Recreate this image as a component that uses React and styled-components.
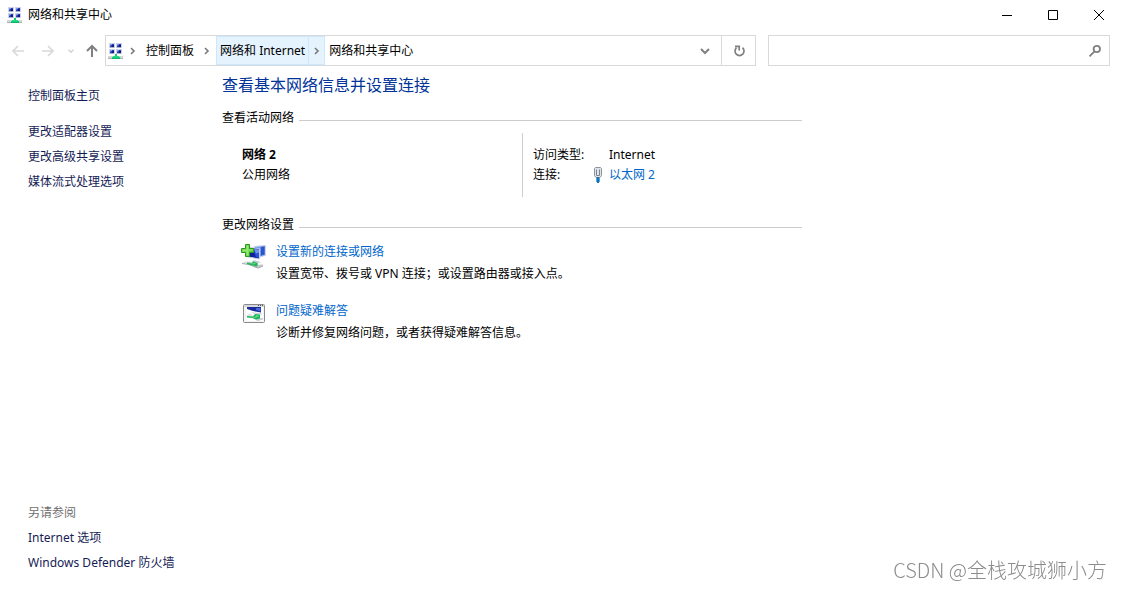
import React from 'react';
import styled, { createGlobalStyle } from 'styled-components';

const sideLinks = ['更改适配器设置', '更改高级共享设置', '媒体流式处理选项'];
const seeAlsoLinks = ['Internet 选项', 'Windows Defender 防火墙'];

const Monitor = ({ x, y }) => (
  <g transform={`translate(${x} ${y})`}>
    <rect width="6" height="5" fill="#cdd3e4" />
    <rect x="1" y="1" width="4" height="3" fill="#2a3fb8" />
    <rect x="1" y="1" width="2" height="1" fill="#7d9be6" />
    <rect x="1" y="2" width="1" height="1" fill="#5f7fdc" />
    <rect x="3" y="2" width="2" height="2" fill="#101a86" />
    <rect x="1" y="4" width="4" height="1" fill="#a9b1c8" />
  </g>
);

const NetworkIcon = () => (
  <svg width="16" height="16" viewBox="0 0 16 16" aria-hidden="true" shapeRendering="crispEdges">
    <Monitor x={1} y={0} />
    <Monitor x={8} y={0} />
    <Monitor x={1} y={6} />
    <Monitor x={8} y={6} />
    <rect x="0" y="13" width="15" height="2" fill="#d3d6d9" />
    <rect x="0" y="15" width="15" height="1" fill="#adb1b5" />
    <rect x="7" y="11" width="2" height="2" fill="#12c872" />
    <rect x="5" y="13" width="6" height="1" fill="#1bdc82" />
    <rect x="4" y="14" width="8" height="1" fill="#12d478" />
    <rect x="4" y="15" width="8" height="1" fill="#0eb566" />
  </svg>
);

const NewConnectionIcon = () => (
  <svg width="26" height="26" viewBox="0 0 26 26" aria-hidden="true">
    <path d="M13 3.500l11.500-1v10l-6 1.500z" fill="#6f9bea" stroke="#cdd5e6" />
    <path d="M20 4l3.500-.5v8l-3.500 1z" fill="#2e55c8" />
    <path d="M6.500 4.500l12 1v10.500l-11-2z" fill="#0f229c" stroke="#c3cde4" />
    <path d="M12 6l6 .5v8.500l-3-1z" fill="#2c50d6" />
    <path d="M13 6l5 .5v3l-3 1z" fill="#6f93ee" />
    <path d="M12 17l5 1 3 1.500-5 .5z" fill="#c5c9d0" />
    <path d="M1 19.500l6-1.500 4 1v2l-5 .5z" fill="#e0e2e6" />
    <path d="M14 22l8-.5v1.500l-5 2-4-1z" fill="#c3c6cc" />
    <path d="M1 20.500l7 1 6 2.500 3 1 5-2" fill="none" stroke="#a4a8b0" />
    <path d="M6 19.500l5 .5 1-2 5 2.500-1 3-5-1-5-1.500z" fill="#1fb257" />
    <path d="M7 20l5 .5 1-1 2 1.500-3 .5z" fill="#6cd88e" />
    <path d="M4.500 1.500h4v4h4v4h-4v4h-4v-4h-4v-4h4z" fill="#5fce45" stroke="#2b9a24" />
    <path d="M5.500 2.500h2v4h4v1h-4v5h-2v-4h-4v-2h4z" fill="#98ea6e" />
  </svg>
);

const TroubleshootIcon = () => (
  <svg width="24" height="22" viewBox="0 0 24 22" aria-hidden="true">
    <rect x="1.500" y="2.500" width="21" height="18" rx="1" fill="#f4f4f4" stroke="#8a8a8a" />
    <rect x="2" y="3" width="20" height="2" fill="#d5d8dd" />
    <path d="M16 3h1v1h-1zM18 3h1v1h-1zM20 3h1v1h-1z" fill="#4c5564" />
    <rect x="4" y="5" width="17" height="14" fill="#ffffff" />
    <path d="M5 5h14v5.500l-8-1.500-6-2z" fill="#1b2b9e" />
    <path d="M14 6h4.500v3.500l-4.500-1.500z" fill="#456ad8" />
    <path d="M8 10l12 1.500v1l-8-1z" fill="#c6cad3" />
    <path d="M3 13l5-1 4 1-4 1.500z" fill="#dadde2" />
    <path d="M14 17l7-1v1.500l-5 1.500-3-1z" fill="#c8ccd3" />
    <path d="M5 14l6 .5 2-2.500 5 .5v4l-4 1-4-1.500-5-.5z" fill="#17b45b" />
    <path d="M7 14.500l6 .5 1-2 3 .5v1l-4 1.500z" fill="#5bd486" />
  </svg>
);

const EthernetIcon = () => (
  <svg width="10" height="16" viewBox="0 0 10 16" aria-hidden="true">
    <path d="M2.500.5h5l1 1v7l-1.500 2h-4l-1.500-2v-7z" fill="#dfe4e9" stroke="#8b949d" />
    <path d="M3.500 2.500v6h3v-6" fill="none" stroke="#7b8691" />
    <path d="M3 11h4v4H3z" fill="#4aaee6" />
    <path d="M4 10h2v6H4z" fill="#1f6fb2" />
  </svg>
);

const Glyph = ({
  d, color = '#808080', size = 16, width = 2,
}) => (
  <svg width={size} height={size} viewBox="0 0 16 16" fill="none" stroke={color} strokeWidth={width} aria-hidden="true">
    <path d={d} />
  </svg>
);

const Chevron = () => (
  <svg width="6" height="8" viewBox="0 0 6 8" fill="none" stroke="#7a7a7a" strokeWidth="1.6" aria-hidden="true">
    <path d="M1 1l3 3-3 3" />
  </svg>
);

const Task = ({ icon, title, text }) => (
  <TaskRow>
    <TaskIcon>{icon}</TaskIcon>
    <div>
      <ActionLink href="#">{title}</ActionLink>
      <TaskText>{text}</TaskText>
    </div>
  </TaskRow>
);

const App = () => (
  <>
    <GlobalStyle />
    <Window>
      <TitleBar>
        <NetworkIcon />
        <Title>网络和共享中心</Title>
        <WindowButton aria-label="最小化">
          <Glyph d="M3 8.5h10" color="#000" width={1} />
        </WindowButton>
        <WindowButton aria-label="最大化">
          <Glyph d="M3.500 3.500h9v9h-9z" color="#000" width={1} />
        </WindowButton>
        <WindowButton aria-label="关闭">
          <Glyph d="M3 3l10 10M13 3L3 13" color="#000" width={1} />
        </WindowButton>
      </TitleBar>

      <NavBar>
        <History>
          <NavButton $width={30} aria-label="后退" disabled>
            <Glyph d="M14 8H3M8 3L3 8l5 5" color="#d9d9d9" width={1.7} />
          </NavButton>
          <NavButton $width={30} aria-label="前进" disabled>
            <Glyph d="M2 8h11M8 3l5 5-5 5" color="#d9d9d9" width={1.7} />
          </NavButton>
          <NavButton $width={16} aria-label="最近浏览的位置" disabled>
            <Glyph d="M4 6l4 4 4-4" color="#d0d0d0" size={10} />
          </NavButton>
          <NavButton $width={26} aria-label="向上">
            <Glyph d="M8 14V3M3 8l5-5 5 5" color="#808080" />
          </NavButton>
        </History>
        <AddressBar aria-label="地址">
          <AddressIcon>
            <NetworkIcon />
          </AddressIcon>
          <Separator aria-hidden="true"><Chevron /></Separator>
          <Crumb>控制面板</Crumb>
          <Separator aria-hidden="true"><Chevron /></Separator>
          <ActiveCrumb>
            <Crumb>网络和 Internet</Crumb>
            <SplitButton aria-label="展开"><Chevron /></SplitButton>
          </ActiveCrumb>
          <Crumb>网络和共享中心</Crumb>
          <Spacer />
          <NavButton $width={32} aria-label="以前的位置">
            <Glyph d="M4 6l4 4 4-4" />
          </NavButton>
          <RefreshButton $width={34} aria-label="刷新">
            <Glyph d="M11.500 4.700a4.500 4.500 0 1 1-6 0M4 3.300h4.200v4.200" width={1.7} />
          </RefreshButton>
        </AddressBar>
        <SearchBox>
          <SearchInput type="text" aria-label="搜索控制面板" />
          <NavButton $width={28} aria-label="搜索">
            <Glyph d="M13 6a3.200 3.200 0 1 1-6.400 0 3.200 3.200 0 0 1 6.400 0zM7.500 8.300L2.500 13.300" width={1.8} />
          </NavButton>
        </SearchBox>
      </NavBar>

      <Body>
        <Sidebar>
          <SideLink href="#">控制面板主页</SideLink>
          <SideGroup>
            {sideLinks.map((text) => (
              <SideLink href="#" key={text}>{text}</SideLink>
            ))}
          </SideGroup>
          <SeeAlso>
            <SeeAlsoTitle>另请参阅</SeeAlsoTitle>
            {seeAlsoLinks.map((text) => (
              <SideLink href="#" key={text}>{text}</SideLink>
            ))}
          </SeeAlso>
        </Sidebar>

        <Main>
          <Heading>查看基本网络信息并设置连接</Heading>
          <SectionTitle>查看活动网络</SectionTitle>
          <ActiveNetwork>
            <NetworkInfo>
              <NetworkName>网络 2</NetworkName>
              <div>公用网络</div>
            </NetworkInfo>
            <Details>
              <dt>访问类型:</dt>
              <dd>Internet</dd>
              <dt>连接:</dt>
              <DetailIcon><EthernetIcon /></DetailIcon>
              <dd><ActionLink href="#">以太网 2</ActionLink></dd>
            </Details>
          </ActiveNetwork>

          <SectionTitle>更改网络设置</SectionTitle>
          <Tasks>
            <Task
              icon={<NewConnectionIcon />}
              title="设置新的连接或网络"
              text="设置宽带、拨号或 VPN 连接；或设置路由器或接入点。"
            />
            <Task
              icon={<TroubleshootIcon />}
              title="问题疑难解答"
              text="诊断并修复网络问题，或者获得疑难解答信息。"
            />
          </Tasks>
        </Main>
      </Body>
      <Watermark>CSDN @全栈攻城狮小方</Watermark>
    </Window>
  </>
);

export default App;

// region STYLES

const GlobalStyle = createGlobalStyle`
  * {
    box-sizing: border-box;
  }

  body {
    margin: 0;
    background: #ffffff;
    color: #000000;
    font: 12px/20px "Noto Sans", "Noto Sans CJK SC", sans-serif;
  }

  h1, h2, p, dl, dd {
    margin: 0;
  }

  a {
    text-decoration: none;
  }

  svg {
    display: block;
    flex: none;
  }

  button, input {
    padding: 0;
    border: 0;
    background: none;
    font: inherit;
    color: inherit;
  }
`;

const Window = styled.div`
  display: flex;
  flex-direction: column;
  min-height: 100vh;
`;

const TitleBar = styled.header`
  display: flex;
  align-items: center;
  height: 29px;
  padding-left: 7px;
`;

const Title = styled.div`
  flex: 1;
  padding-left: 5px;
`;

const WindowButton = styled.button`
  display: flex;
  align-items: center;
  justify-content: center;
  width: 46px;
  height: 28px;
`;

const NavBar = styled.nav`
  display: flex;
  gap: 12px;
  height: 31px;
  margin-top: 6px;
  padding-right: 12px;
`;

const History = styled.div`
  display: flex;
  padding-left: 3px;
  margin-right: -12px;
`;

const NavButton = styled.button`
  display: flex;
  align-items: center;
  justify-content: center;
  flex: none;
  width: ${(props) => props.$width}px;
  height: 100%;
`;

const AddressBar = styled.div`
  display: flex;
  align-items: stretch;
  flex: 652 1 0;
  min-width: 0;
  border: 1px solid #d9d9d9;
`;

const AddressIcon = styled.span`
  display: flex;
  align-items: center;
  padding-left: 2px;
`;

const Separator = styled.span`
  display: flex;
  align-items: center;
  justify-content: center;
  width: 18px;
`;

const Crumb = styled.button`
  padding: 0 4px;
  white-space: nowrap;
`;

const ActiveCrumb = styled.span`
  display: flex;
  background: #e5f3ff;
  border: 1px solid #cce8ff;

  ${Crumb} {
    padding: 0 3px;
  }
`;

const SplitButton = styled.button`
  display: flex;
  align-items: center;
  justify-content: center;
  width: 16px;
  border-left: 1px solid #cce8ff;
`;

const Spacer = styled.span`
  flex: 1;
`;

const RefreshButton = styled(NavButton)`
  border-left: 1px solid #d9d9d9;
`;

const SearchBox = styled.div`
  display: flex;
  flex: 341 1 0;
  min-width: 0;
  border: 1px solid #d9d9d9;
`;

const SearchInput = styled.input`
  flex: 1;
  min-width: 0;
  padding-left: 8px;
  outline: none;
`;

const Body = styled.div`
  display: flex;
  flex: 1;
`;

const Sidebar = styled.aside`
  display: flex;
  flex-direction: column;
  flex: none;
  width: 222px;
  padding: 17px 0 14px 28px;
`;

const SideGroup = styled.div`
  margin-top: 11px;
`;

const SideLink = styled.a`
  display: block;
  line-height: 25px;
  color: #151c55;
`;

const SeeAlso = styled.div`
  margin-top: auto;
`;

const SeeAlsoTitle = styled.div`
  line-height: 25px;
  color: #707070;
`;

const Main = styled.main`
  flex: 1;
  max-width: 580px;
  padding-top: 9px;
`;

const Heading = styled.h1`
  margin-bottom: 13px;
  font-size: 16px;
  font-weight: 400;
  line-height: 20px;
  color: #003399;
`;

const SectionTitle = styled.h2`
  display: flex;
  align-items: center;
  font-size: 12px;
  font-weight: 400;
  line-height: 20px;

  &::after {
    content: '';
    flex: 1;
    height: 1px;
    margin: 5px 0 0 5px;
    background: #cccccc;
  }
`;

const ActiveNetwork = styled.div`
  display: flex;
  margin: 5px 0 18px;
`;

const NetworkInfo = styled.div`
  width: 300px;
  padding: 12px 0 12px 20px;
`;

const NetworkName = styled.div`
  font-weight: 700;
`;

const Details = styled.dl`
  display: grid;
  grid-template-columns: 60px 16px auto;
  align-content: start;
  padding: 12px 0 12px 10px;
  border-left: 1px solid #cccccc;

  dd {
    grid-column: 3;
  }
`;

const DetailIcon = styled.span`
  display: flex;
  align-items: center;
`;

const ActionLink = styled.a`
  color: #0066cc;
`;

const Tasks = styled.div`
  display: flex;
  flex-direction: column;
  gap: 17px;
  padding: 7px 0 0 19px;
`;

const TaskRow = styled.div`
  display: flex;
`;

const TaskIcon = styled.div`
  display: flex;
  flex: none;
  justify-content: center;
  width: 26px;
  margin-right: 9px;
  padding-top: 1px;
`;

const TaskText = styled.p`
  margin-top: 2px;
`;

const Watermark = styled.div`
  position: fixed;
  right: 15px;
  bottom: 6px;
  font-size: 20px;
  line-height: 26px;
  font-weight: 300;
  font-family: "Noto Sans CJK SC", sans-serif;
  color: #8c8c8c;
`;

// endregion
